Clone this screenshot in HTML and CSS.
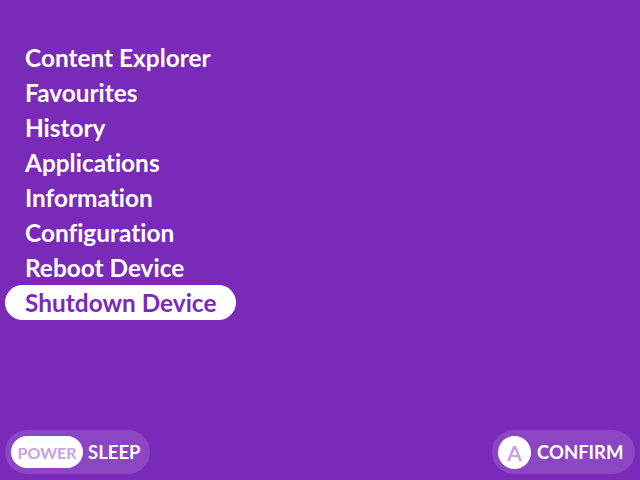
FILE: index.html
```html
<!DOCTYPE html>
<html>
<head>
<meta charset="utf-8">
<link rel="stylesheet" href="styles.css">
</head>
<body>
<div class="screen">
  <ul class="menu">
    <li class="item">Content Explorer</li>
    <li class="item">Favourites</li>
    <li class="item">History</li>
    <li class="item">Applications</li>
    <li class="item">Information</li>
    <li class="item">Configuration</li>
    <li class="item">Reboot Device</li>
    <li class="item active">Shutdown Device</li>
  </ul>
  <div class="footer">
    <div class="hint hint-left">
      <span class="key key-pill">POWER</span>
      <span class="label">SLEEP</span>
    </div>
    <div class="hint hint-right">
      <span class="key key-circle">A</span>
      <span class="label">CONFIRM</span>
    </div>
  </div>
</div>
</body>
</html>
```

FILE: styles.css
```css
html, body {
  margin: 0;
  padding: 0;
}
body {
  background: #7a2ab9;
  font-family: Lato, "Open Sans", sans-serif;
  font-weight: 700;
  color: #ffffff;
  font-variant-ligatures: none;
}
.screen {
  width: 640px;
  height: 480px;
  display: flex;
  flex-direction: column;
  box-sizing: border-box;
}
.menu {
  list-style: none;
  margin: 40px 0 0 5px;
  padding: 0;
  display: flex;
  flex-direction: column;
  align-items: flex-start;
}
.item {
  font-size: 24.4px;
  line-height: 35px;
  height: 35px;
  padding: 0 20px;
  border-radius: 18px;
  white-space: nowrap;
}
.item.active {
  background: #ffffff;
  color: #7a2ab9;
}
.footer {
  margin-top: auto;
  display: flex;
  justify-content: space-between;
  align-items: center;
  padding: 0 5px 6px 5px;
}
.hint {
  display: flex;
  align-items: center;
  height: 44px;
  border-radius: 22px;
  background: #8c45c3;
  box-sizing: border-box;
}
.hint-left {
  width: 145px;
  padding-left: 6px;
  gap: 5px;
}
.hint-right {
  width: 143px;
  padding-left: 6px;
  gap: 6px;
}
.key {
  background: #ffffff;
  color: #c6a2e4;
  display: flex;
  align-items: center;
  justify-content: center;
}
.key-pill {
  width: 72px;
  height: 32px;
  border-radius: 16px;
  font-size: 16px;
}
.key-circle {
  width: 33px;
  height: 33px;
  border-radius: 50%;
  font-size: 21px;
}
.label {
  font-size: 18.5px;
  color: #ffffff;
}
```
